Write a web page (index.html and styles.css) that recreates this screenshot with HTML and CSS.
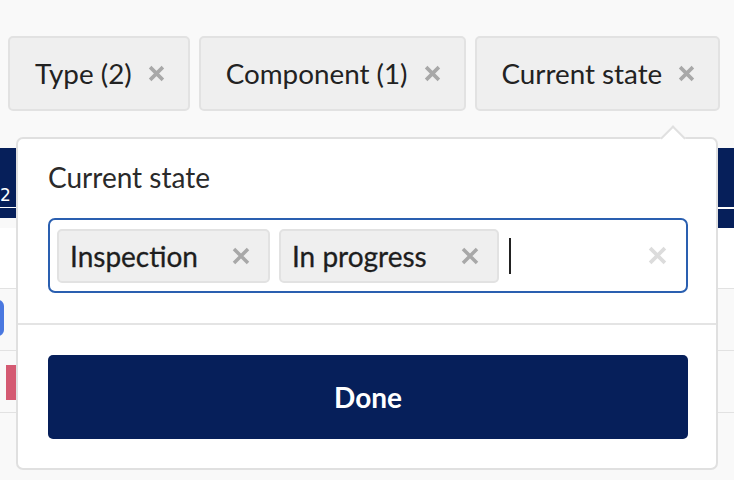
FILE: index.html
```html
<!DOCTYPE html>
<html>
<head>
<meta charset="utf-8">
<link rel="stylesheet" href="styles.css">
</head>
<body>
<div class="page">
  <div class="filters">
    <button class="chip"><span>Type (2)</span><svg class="x" viewBox="0 0 16 16"><path d="M2 2L14 14M14 2L2 14"/></svg></button>
    <button class="chip"><span>Component (1)</span><svg class="x" viewBox="0 0 16 16"><path d="M2 2L14 14M14 2L2 14"/></svg></button>
    <button class="chip"><span>Current state</span><svg class="x" viewBox="0 0 16 16"><path d="M2 2L14 14M14 2L2 14"/></svg></button>
  </div>

  <div class="table">
    <div class="thead">
      <div class="th-left"><a class="th-link">2</a></div>
      <div class="th-mid"></div>
      <div class="th-right"><div class="th-line"></div></div>
    </div>
    <div class="row row-white"></div>
    <div class="row"><span class="badge-blue"></span></div>
    <div class="row"><span class="badge-red"></span></div>
    <div class="row"></div>
  </div>

  <div class="popover">
    <div class="arrow"></div>
    <div class="pop-body">
      <div class="label">Current state</div>
      <div class="select">
        <span class="tag"><span>Inspection</span><svg class="tx" viewBox="0 0 18 18"><path d="M2 2L16 16M16 2L2 16"/></svg></span>
        <span class="tag"><span>In progress</span><svg class="tx" viewBox="0 0 18 18"><path d="M2 2L16 16M16 2L2 16"/></svg></span>
        <span class="caret"></span>
        <svg class="clear" viewBox="0 0 18 18"><path d="M2 2L16 16M16 2L2 16"/></svg>
      </div>
    </div>
    <div class="pop-foot">
      <button class="done">Done</button>
    </div>
  </div>
</div>
</body>
</html>
```

FILE: styles.css
```css
* { box-sizing: border-box; }
html, body { margin: 0; padding: 0; }
body {
  background: #f9f9f9;
  font-family: Lato, "Noto Sans", "Liberation Sans", sans-serif;
  color: #222;
  width: 734px;
  height: 480px;
  overflow: hidden;
}
.page { position: relative; height: 480px; }

.filters {
  display: flex;
  gap: 9px;
  padding: 36px 0 0 8px;
}
.chip {
  display: flex;
  align-items: center;
  gap: 16px;
  height: 75px;
  padding: 0 23px 0 25px;
  background: #efefef;
  border: 2px solid #e2e2e2;
  border-radius: 5px;
  font-family: inherit;
  font-size: 27.8px;
  color: #222;
}
.chip .x { width: 17px; height: 17px; }
.chip .x path { stroke: #a8a8a8; stroke-width: 3.4; fill: none; }

.table { margin-top: 37px; }
.thead { display: flex; height: 80px; }
.th-left {
  width: 16px; height: 70px; background: #061f5a;
  display: flex; align-items: flex-end; justify-content: flex-start;
  overflow: hidden; padding-bottom: 10px;
}
.th-link {
  color: #fff; font-family: "DejaVu Sans", sans-serif; font-size: 17px;
  border-bottom: 1px solid #fff; padding: 0 5px 2px 0; white-space: nowrap;
}
.th-mid { flex: 1; background: #061f5a; }
.th-right { width: 16px; background: #061f5a; padding-top: 59px; }
.th-line { height: 2px; background: #fff; }
.row { height: 62px; border-top: 1px solid #e2e2e2; position: relative; }
.row-white { height: 60px; background: #fff; border-top: 0; }
.badge-blue {
  position: absolute; left: -10px; top: 11px; width: 14px; height: 36px;
  background: #4a78e0; border-radius: 6px;
}
.badge-red {
  position: absolute; left: 6px; top: 14px; width: 10px; height: 35px;
  background: #d45a72;
}

.popover {
  position: absolute;
  left: 16px; top: 137px;
  width: 702px; height: 333px;
  background: #fff;
  border: 2px solid #e0e0e0;
  border-radius: 7px;
}
.arrow {
  position: absolute;
  top: -10px; left: 646px;
  width: 18px; height: 18px;
  background: #fff;
  border-left: 2px solid #e0e0e0;
  border-top: 2px solid #e0e0e0;
  transform: rotate(45deg);
}
.pop-body {
  position: relative;
  padding: 23px 28px 30px 30px;
  border-bottom: 2px solid #e4e4e4;
}
.label {
  font-size: 28px;
  line-height: 30px;
  color: #2a2a2a;
  margin-bottom: 26px;
}
.select {
  display: flex;
  align-items: center;
  gap: 9px;
  height: 75px;
  padding: 0 7px;
  border: 2px solid #2a5fb0;
  border-radius: 7px;
}
.tag {
  display: flex;
  align-items: center;
  gap: 34px;
  height: 54px;
  padding: 0 18px 0 11px;
  background: #efefef;
  border: 2px solid #e2e2e2;
  border-radius: 5px;
  font-size: 28px;
  color: #1e1e1e;
  -webkit-text-stroke: 0.3px #1e1e1e;
}
.tx { width: 18px; height: 18px; }
.tx path { stroke: #a8a8a8; stroke-width: 3.5; fill: none; }
.caret { width: 2px; height: 36px; background: #222; margin-left: 1px; }
.clear { width: 19px; height: 19px; margin-left: auto; margin-right: 12px; }
.clear path { stroke: #dcdcdc; stroke-width: 3.5; fill: none; }

.pop-foot { padding: 30px 28px 0 30px; }
.done {
  display: block;
  width: 100%;
  height: 84px;
  background: #061f5a;
  border: 0;
  border-radius: 5px;
  color: #fff;
  font-family: inherit;
  font-size: 28px;
  font-weight: 700;
}
```
